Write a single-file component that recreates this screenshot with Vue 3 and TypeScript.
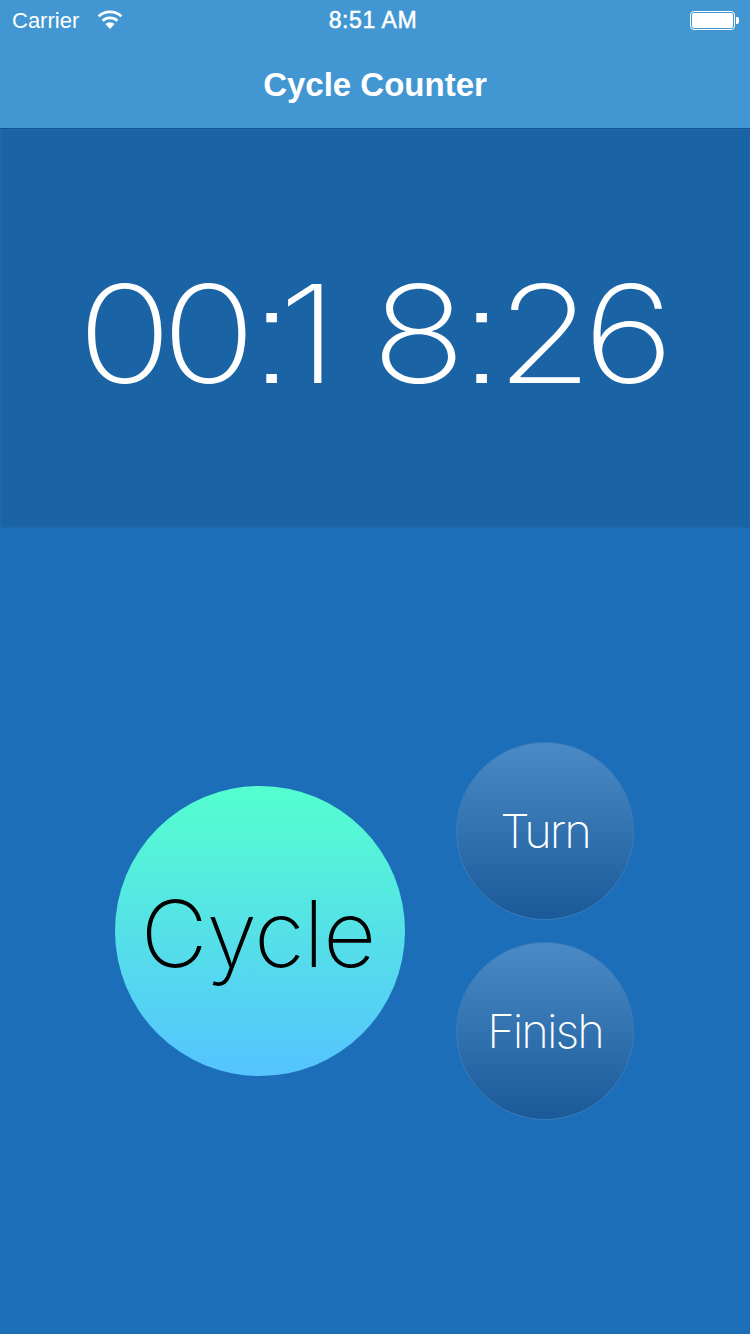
<template>
  <div class="screen">
    <header class="nav">
      <div class="status">
        <div class="status-left">
          <span>Carrier</span>
          <svg class="wifi" width="26" height="20" viewBox="0 0 26 20">
            <path d="M13 19 8.4 14a7 7 0 0 1 9.2 0Z" fill="#fff" />
            <path d="M5.6 10.8a11 11 0 0 1 14.8 0" fill="none" stroke="#fff" stroke-width="2.8" />
            <path d="M1.6 6.2a17 17 0 0 1 22.8 0" fill="none" stroke="#fff" stroke-width="2.8" />
          </svg>
        </div>
        <div class="clock">8:51 AM</div>
        <div class="status-right">
          <div class="battery"><div class="battery-fill"></div></div>
          <div class="battery-tip"></div>
        </div>
      </div>
      <div class="title">Cycle Counter</div>
    </header>

    <section class="timer">
      <div class="time">
        <span
          v-for="(char, i) in time"
          :key="i"
          class="cell"
          :class="{ colon: char === ':', one: char === '1' }"
        >{{ char }}</span>
      </div>
    </section>

    <main class="controls">
      <button class="round cycle">Cycle</button>
      <div class="side">
        <button v-for="label in sideButtons" :key="label" class="round small">{{ label }}</button>
      </div>
    </main>
  </div>
</template>

<script setup lang="ts">
const time = "00:18:26";
const sideButtons: string[] = ["Turn", "Finish"];
</script>

<style>
html,
body {
  margin: 0;
  background: #1c6eb8;
}
</style>

<style scoped>
.screen {
  width: 750px;
  height: 1334px;
  display: flex;
  flex-direction: column;
  background: #1c6eb8;
  font-family: "Liberation Sans", sans-serif;
  color: #fff;
}

.nav {
  height: 128px;
  flex: none;
  background: #4297d2;
  border-bottom: 1px solid #14528a;
}

.status {
  height: 40px;
  padding-top: 1px;
  box-sizing: border-box;
  display: grid;
  grid-template-columns: 1fr auto 1fr;
  align-items: center;
  font-size: 22px;
}

.status-left {
  display: flex;
  align-items: center;
  gap: 18px;
  padding-left: 12px;
}

.wifi {
  margin-top: -1px;
}

.clock {
  font-size: 23px;
  letter-spacing: 0.6px;
  margin-right: 4px;
  -webkit-text-stroke: 0.5px #fff;
}

.status-right {
  display: flex;
  justify-content: flex-end;
  align-items: center;
  gap: 1px;
  padding-right: 11px;
}

.battery {
  width: 45px;
  height: 19px;
  box-sizing: border-box;
  border: 1px solid #fff;
  border-radius: 4px;
  padding: 1px;
}

.battery-fill {
  height: 100%;
  background: #fff;
  border-radius: 2px;
}

.battery-tip {
  width: 3px;
  height: 7px;
  background: #fff;
  border-radius: 0 2px 2px 0;
}

.title {
  text-align: center;
  font-size: 33px;
  font-weight: 700;
  line-height: 40px;
  margin-top: 25px;
}

.timer {
  height: 399px;
  flex: none;
  box-sizing: border-box;
  padding-top: 10px;
  padding-right: 8px;
  background: #1a63a5;
  border: 1px solid #1e69ad;
  display: flex;
  align-items: center;
  justify-content: center;
}

.time {
  display: flex;
  font-family: Inter, sans-serif;
  font-weight: 200;
  font-size: 136px;
  line-height: 1;
  letter-spacing: -9px;
  font-feature-settings: "ss07";
  transform: scaleX(1.15);
}

.cell {
  width: 73px;
  display: flex;
  justify-content: center;
}

.cell.colon {
  width: 36.5px;
}

.cell.one {
  justify-content: flex-start;
  margin-left: -8px;
  margin-right: 8px;
}

.controls {
  flex: 1;
  display: flex;
  align-items: center;
  justify-content: center;
  gap: 51px;
  padding-right: 1px;
}

.side {
  display: flex;
  flex-direction: column;
  gap: 22px;
}

.round {
  border-radius: 50%;
  padding: 0;
  font-family: Inter, sans-serif;
  font-weight: 200;
  box-sizing: border-box;
}

.cycle {
  width: 290px;
  height: 290px;
  padding-right: 4px;
  padding-top: 5px;
  border: none;
  background: linear-gradient(180deg, #55ffcf, #55c3ff);
  color: #000;
  font-size: 92px;
  letter-spacing: -1px;
}

.small {
  width: 178px;
  height: 178px;
  padding-bottom: 1px;
  border: 1px solid #3a7cba;
  background: linear-gradient(180deg, #4a8ac6, #1a5a99);
  color: #fff;
  font-size: 47px;
  letter-spacing: -2px;
}
</style>
